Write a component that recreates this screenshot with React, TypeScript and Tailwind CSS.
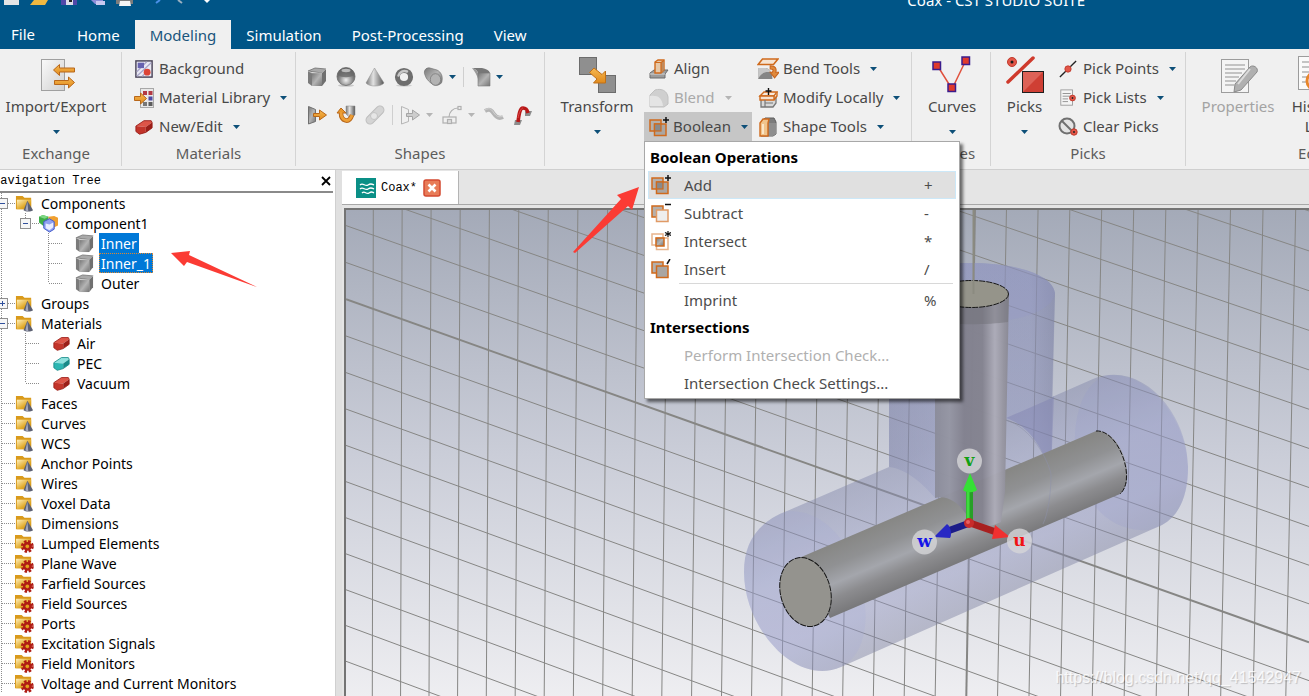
import React from 'react';

type IconProps = { size?: number };

function Svg({ size = 20, box = 20, children }: { size?: number; box?: number; children: React.ReactNode }) {
  return (
    <svg width={size} height={size} viewBox={`0 0 ${box} ${box}`} className="shrink-0" aria-hidden="true">
      {children}
    </svg>
  );
}

// Gradients shared by all the icons
function SharedDefs() {
  return (
    <svg width="0" height="0" className="absolute" aria-hidden="true">
      <defs>
        <linearGradient id="steel" x1="0" y1="0" x2="1" y2="1">
          <stop offset="0" stopColor="#777" />
          <stop offset="0.5" stopColor="#b4b4b4" />
          <stop offset="1" stopColor="#757575" />
        </linearGradient>
        <linearGradient id="steelH" x1="0" y1="0" x2="1" y2="0">
          <stop offset="0" stopColor="#777" />
          <stop offset="0.4" stopColor="#e2e2e2" />
          <stop offset="1" stopColor="#555" />
        </linearGradient>
        <radialGradient id="ball" cx="0.5" cy="0.7" r="0.6">
          <stop offset="0" stopColor="#f0f0f0" />
          <stop offset="0.6" stopColor="#8b8b8b" />
          <stop offset="1" stopColor="#555" />
        </radialGradient>
        <linearGradient id="paper" x1="0" y1="0" x2="1" y2="1">
          <stop offset="0" stopColor="#fafafa" />
          <stop offset="1" stopColor="#d0d0d0" />
        </linearGradient>
        <linearGradient id="amber" x1="0" y1="0" x2="0" y2="1">
          <stop offset="0" stopColor="#f6b850" />
          <stop offset="1" stopColor="#e08a1c" />
        </linearGradient>
        <linearGradient id="folder" x1="0" y1="0" x2="1" y2="1">
          <stop offset="0" stopColor="#fff0bb" />
          <stop offset="0.6" stopColor="#e0a826" />
          <stop offset="1" stopColor="#c88a10" />
        </linearGradient>
      </defs>
    </svg>
  );
}

function Caret({ muted = false }: { muted?: boolean }) {
  return (
    <svg width="7" height="4" viewBox="0 0 7 4" className="shrink-0" aria-hidden="true">
      <path d="M0 0h7L3.5 4z" fill={muted ? '#b5b5b5' : '#0d4f78'} />
    </svg>
  );
}

/* ---------- large ribbon icons ---------- */

const ImportExportIcon = () => (
  <Svg size={38} box={38}>
    <rect x="4.500" y="3.500" width="23" height="31" fill="url(#paper)" stroke="#a0a0a0" />
    <path d="M16.500 14l6-5.500v3.500h15v4h-15v3.500z" fill="url(#amber)" stroke="#b8671a" />
    <path d="M37.500 26.500l-6-5.500v3.500h-14v4h14V32z" fill="url(#amber)" stroke="#b8671a" />
  </Svg>
);

const TransformIcon = () => (
  <Svg size={38} box={38}>
    <rect x="1.500" y="1.500" width="17" height="17" fill="#8f8f8f" stroke="#6c6c6c" />
    <rect x="20.500" y="19.500" width="17" height="17" fill="#8f8f8f" stroke="#6c6c6c" />
    <path d="M11.500 16.500l4.500-4.500 8 6.500 3.500-3.500v12H15.500l3.500-4z" fill="url(#amber)" stroke="#c07018" />
  </Svg>
);

const CurvesIcon = () => (
  <Svg size={40} box={40}>
    <path d="M5 10l15 24L34 5" fill="none" stroke="#e0503c" strokeWidth="1.500" />
    <g fill="#e03a2c" stroke="#3b1c8c" strokeWidth="1.500">
      <rect x="1" y="7" width="7.500" height="7.500" />
      <rect x="30" y="2" width="7.500" height="7.500" />
      <rect x="16" y="29" width="7.500" height="7.500" />
    </g>
  </Svg>
);

const PicksIcon = () => (
  <Svg size={40} box={40}>
    <circle cx="7" cy="7" r="4.500" fill="#e25648" stroke="#c23a2c" />
    <circle cx="7" cy="7" r="1.500" fill="#1c1c1c" />
    <path d="M3 27L28 3" stroke="#cf3a2c" strokeWidth="3.500" strokeLinecap="round" />
    <rect x="17.500" y="16.500" width="21" height="21" fill="#cf3f34" stroke="#1f1f1f" />
    <path d="M18 37V17h20z" fill="#dd6257" />
  </Svg>
);

const PropertiesIcon = () => (
  <Svg size={40} box={40}>
    <rect x="3.500" y="4.500" width="27" height="33" fill="#f4f4f4" stroke="#9c9c9c" />
    <path d="M7 10h20M7 14h20M7 18h17M7 22h14M7 26h11M7 30h9" stroke="#b3b3b3" strokeWidth="1.500" />
    <path d="M32 12c3-3 9 1 7 5L23 35l-7 2 1-8z" fill="#b0b0b0" stroke="#8a8a8a" />
    <path d="M32 14L20 29" stroke="#dcdcdc" strokeWidth="2" />
  </Svg>
);

const HistoryIcon = () => (
  <Svg size={40} box={40}>
    <rect x="1.500" y="1.500" width="27" height="33" fill="#fafafa" stroke="#9c9c9c" />
    <path d="M5 7h20M5 12h20M5 17h20M5 22h8M5 27h8" stroke="#b3b3b3" strokeWidth="1.500" />
    <circle cx="19" cy="26" r="9" fill="#fff" stroke="#e8852a" strokeWidth="3" />
  </Svg>
);

/* ---------- small ribbon icons ---------- */

const BackgroundIcon = () => (
  <Svg size={18}>
    <rect x="1" y="1" width="18" height="18" fill="#e9e9f4" stroke="#4a4458" strokeWidth="1.600" />
    <path d="M2 13L13 2M2 18L18 3M8 18l5-5" stroke="#a8a4c8" strokeWidth="1.400" />
    <rect x="3" y="3" width="7" height="6" fill="#6762b0" />
    <circle cx="13.500" cy="13.500" r="3.800" fill="#dc4436" />
  </Svg>
);

const MaterialLibraryIcon = () => (
  <Svg size={20}>
    <rect x="6.500" y="0.500" width="13" height="19" fill="#e8e8e8" stroke="#a8a8a8" />
    <g fill="#b33a44">
      <rect x="9" y="3" width="4" height="4" />
      <rect x="14.500" y="3" width="4" height="4" />
    </g>
    <rect x="14.500" y="8.500" width="4" height="4" fill="#4d4aa4" />
    <rect x="9" y="14" width="4" height="4" fill="#777" />
    <rect x="14.500" y="14" width="4" height="4" fill="#5c5c5c" />
    <path d="M.5 8.500h6V5l6 5.500-6 5.500v-3.500h-6z" fill="url(#amber)" stroke="#b8671a" />
  </Svg>
);

function BrickIcon({ color = 'red', size = 18 }: IconProps & { color?: 'red' | 'teal' }) {
  const [top, front, side] = color === 'red' ? ['#dd5548', '#c2342a', '#9a1e18'] : ['#8fe2de', '#2cb6b2', '#188a88'];
  return (
    <Svg size={size}>
      <path d="M1 9l9-6h8l1 2-7 5z" fill={top} />
      <path d="M1 9l11 1v6l-7 2-4-3z" fill={front} />
      <path d="M12 10l7-5v6l-7 5z" fill={side} />
      <path d="M1 9l9-6h8l1 2v6l-7 5-7 2-4-3z" fill="none" stroke={side} strokeLinejoin="round" />
    </Svg>
  );
}

const CubeIcon = ({ size = 20 }: IconProps) => (
  <Svg size={size}>
    <path d="M1 4l7-3 11 1-4 4z" fill="#a9a9a9" stroke="#6e6e6e" strokeWidth="0.800" />
    <path d="M1 4l4 2v13l-4-3z" fill="#7b7b7b" />
    <path d="M5 6h10v13H5z" fill="url(#steel)" />
    <path d="M15 6l4-4v12l-4 5z" fill="#707070" />
    <path d="M1 4l4 2h10l4-4" stroke="#c4c4c4" strokeWidth="0.600" fill="none" />
  </Svg>
);

const SphereIcon = () => (
  <Svg>
    <ellipse cx="10" cy="18.500" rx="8" ry="1.300" fill="#c9c9c9" />
    <circle cx="10" cy="9.500" r="9" fill="url(#ball)" stroke="#6a6a6a" strokeWidth="0.800" />
    <path d="M1.500 8C2 3 6 1 10 1s8 2 8.500 7c-5 3-12 3-17 0z" fill="#6a6a6a" opacity="0.800" />
    <ellipse cx="10" cy="3.500" rx="4.500" ry="1.700" fill="#cfcfcf" opacity="0.800" />
  </Svg>
);

const ConeIcon = () => (
  <Svg>
    <path d="M9.500 1L19 16c-3 4-15 4-18 0z" fill="url(#steelH)" stroke="#8a8a8a" strokeWidth="0.500" />
  </Svg>
);

const TorusIcon = () => (
  <Svg>
    <ellipse cx="10" cy="18.500" rx="8" ry="1.200" fill="#cfcfcf" />
    <circle cx="10" cy="10" r="6.600" fill="none" stroke="#6e6e6e" strokeWidth="5" />
    <path d="M4.500 8.500a6.300 6.300 0 018.500-4" fill="none" stroke="#c8c8c8" strokeWidth="2.500" strokeLinecap="round" />
  </Svg>
);

const CylinderIcon = () => (
  <Svg>
    <path d="M2 8c-2-4 1-8 5-7l7 2c4 2 6 6 5 11 0 3-4 5-8 4C7 16 3 12 2 8z" fill="url(#steel)" stroke="#6a6a6a" strokeWidth="0.600" />
    <ellipse cx="12.500" cy="12.500" rx="5.200" ry="5.800" fill="#b3b3b3" stroke="#747474" strokeWidth="0.700" />
  </Svg>
);

const ExtrudeFaceIcon = () => (
  <Svg>
    <path d="M1 1h10c4 1 7 2 8 5H7C6 3 4 2 1 1z" fill="#777" />
    <path d="M1 1c3 1 5 2 6 5v6C6 8 4 5 1 1z" fill="#9a9a9a" />
    <path d="M7 6h12v13H7z" fill="url(#steel)" stroke="#7a7a7a" strokeWidth="0.600" />
  </Svg>
);

function ExtrudeIcon({ muted = false }: { muted?: boolean }) {
  return (
    <Svg>
      <path
        d="M1.500 1.500l7 3v12l-7 2.500z"
        fill={muted ? '#f0f0f0' : 'url(#steel)'}
        stroke={muted ? '#b5b5b5' : '#707070'}
      />
      <path
        d="M6.500 8.500h6V5l7 5-7 5v-3.500h-6z"
        fill={muted ? '#cdcdcd' : 'url(#amber)'}
        stroke={muted ? '#a5a5a5' : '#b8671a'}
      />
    </Svg>
  );
}

const RotateIcon = () => (
  <Svg>
    <path d="M10 1h9v9l-5 3-4-4z" fill="url(#steelH)" stroke="#8a8a8a" strokeWidth="0.500" />
    <path d="M5 8c0 8 8 11 11 2" fill="none" stroke="#b8671a" strokeWidth="4.600" />
    <path d="M1 8l4-5 5 5z" fill="#e8982c" stroke="#b8671a" />
    <path d="M5 7c0 9 8 12 11 3" fill="none" stroke="#ee9f35" strokeWidth="2.800" />
  </Svg>
);

const LoftIcon = () => (
  <Svg>
    <rect x="-1" y="6" width="22" height="8" rx="4" transform="rotate(-45 10 10)" fill="#d4d4d4" stroke="#bdbdbd" />
    <circle cx="9" cy="11" r="3.500" fill="#e6e6e6" stroke="#c4c4c4" />
  </Svg>
);

const WireIcon = () => (
  <Svg>
    <g fill="none" stroke="#b0b0b0" strokeWidth="1.200">
      <path d="M7 12c0-5 4-9 9-9" />
      <rect x="1" y="12" width="13" height="6" />
      <rect x="5.500" y="14.500" width="4" height="4" fill="#ddd" />
      <rect x="16" y="1.500" width="3" height="3" />
    </g>
  </Svg>
);

const WaveIcon = () => (
  <Svg>
    <path d="M1 6c5-3 7 0 9 3s5 5 9 3" fill="none" stroke="#b4b4b4" strokeWidth="4" />
    <path d="M1 5c5-3 7 0 9 3s5 5 9 3" fill="none" stroke="#d2d2d2" />
  </Svg>
);

const BondWireIcon = () => (
  <Svg>
    <path d="M2 15h7l-2 5H1zM12 6h7l-2 5h-5z" fill="#8c8c8c" />
    <path d="M5 17C6 9 7 3 10 3s4 1 5 5" fill="none" stroke="#b81818" strokeWidth="3.600" />
    <path d="M5 13C6 8 8 3 10 3" fill="none" stroke="#e04848" />
  </Svg>
);

const AlignIcon = () => (
  <Svg>
    <path d="M1 14l4-3h14l-3 4v4H1z" fill="#9c9c9c" stroke="#6c6c6c" />
    <path d="M1 15h15" stroke="#d4d4d4" />
    <path d="M6 3l3-2h6v10l-3 3H6z" fill="#e6c8a8" stroke="#cf6a1c" strokeWidth="1.400" />
    <path d="M12 3.500l3-2V11l-3 3z" fill="#c08a5c" />
    <path d="M6 3.500h6l3-2M12 3.500V14" fill="none" stroke="#cf6a1c" strokeWidth="1.200" />
  </Svg>
);

const BlendIcon = () => (
  <Svg>
    <path d="M1 7l5-5c7-2 12 1 13 7v7l-4 3H1z" fill="#cfcfcf" stroke="#c0c0c0" />
    <path d="M1 8c8-1 12 2 13 10H1z" fill="#e4e4e4" />
  </Svg>
);

const BendIcon = () => (
  <Svg size={22}>
    <path d="M1 6l4-5h14l-4 5z" fill="#f6e4d2" stroke="#cf6a1c" strokeWidth="1.400" />
    <path d="M1 9h7c4 1 6 4 6 10H1z" fill="#858585" />
    <path d="M1 9h7c3 1 4 2 5 4-5-1-9 0-12 6z" fill="#c6c6c6" />
    <path d="M12 7c5 0 6 3 5 6h3l-4 5-4-5h2c1-2 1-3-2-3z" fill="#e08a3c" stroke="#c8641c" />
  </Svg>
);

const ModifyIcon = () => (
  <Svg>
    <path d="M3 11v8h12l3-4V8" fill="#d8d8d8" stroke="#777" strokeWidth="1.300" />
    <path d="M2 8l4-4h13l-3 4z" fill="#f8eadc" stroke="#cf6a1c" strokeWidth="1.400" />
    <path d="M2 8h14v4H2zM16 12l3-4V4" fill="#f5e2d0" stroke="#cf6a1c" strokeWidth="1.400" />
    <path d="M7 12v7M7 15h8" fill="none" stroke="#777" strokeWidth="1.200" />
    <path d="M10.500 0v7M7.500 3h6" stroke="#111" strokeWidth="1.400" />
  </Svg>
);

const ShapeToolsIcon = () => (
  <Svg>
    <path d="M3 5l4-4h9l2 4v12l-3 2H3z" fill="#7c7c7c" stroke="#5e5e5e" />
    <path d="M11 6h7v11l-3 2h-4z" fill="#8e8e8e" />
    <path d="M2 6l3-4h6l-1 4v13H2z" fill="#f0c48c" stroke="#cf6a1c" strokeWidth="1.400" />
    <path d="M5 7v10" stroke="#fbe6c8" strokeWidth="2" />
  </Svg>
);

type BoolOp = 'add' | 'subtract' | 'intersect' | 'insert';

function BooleanIcon({ op }: { op: BoolOp }) {
  const back = op === 'intersect' ? 'none' : '#b4b0ac';
  const front = op === 'subtract' ? '#eeeeee' : op === 'intersect' ? 'none' : '#aaa6a2';
  const faint = op === 'intersect' ? '#e8b48c' : '#cf6a1c';
  return (
    <Svg>
      <rect x="1" y="3" width="11" height="11" fill={back} stroke={faint} strokeWidth="1.500" />
      <rect x="5.500" y="7" width="11.500" height="11.500" fill={front} stroke={op === 'subtract' ? '#e09a66' : faint} strokeWidth="1.500" />
      {op === 'add' && <rect x="5.500" y="7" width="6.500" height="7" fill="#8a8a8a" stroke="#cf6a1c" strokeWidth="1.200" />}
      {op === 'intersect' && <rect x="5" y="7" width="8" height="8" fill="url(#steel)" stroke="#cf6a1c" strokeWidth="1.500" />}
      <g stroke="#111" strokeWidth="1.500">
        {op === 'add' && <path d="M17 0v6M14 3h6" />}
        {op === 'subtract' && <path d="M14 1.500h6" />}
        {op === 'intersect' && <path d="M17 0v6M14 1.500l6 3M20 1.500l-6 3" strokeWidth="1.200" />}
        {op === 'insert' && <path d="M19 0l-3 5" />}
      </g>
    </Svg>
  );
}

const PickPointsIcon = () => (
  <Svg size={18}>
    <path d="M1 19L19 1" stroke="#222" strokeWidth="1.500" />
    <circle cx="10" cy="10" r="3.500" fill="#e25648" stroke="#c0392b" />
  </Svg>
);

const PickListsIcon = () => (
  <Svg size={18}>
    <rect x="2" y="1" width="13" height="17" fill="#f4f4f4" stroke="#9a9a9a" />
    <path d="M4 5h9M4 8h9M4 11h6M4 14h6" stroke="#8c8c8c" />
    <circle cx="15" cy="10" r="3.200" fill="#e25648" stroke="#c0392b" />
    <circle cx="15" cy="10" r="1" fill="#222" />
  </Svg>
);

const ClearPicksIcon = () => (
  <Svg size={20}>
    <circle cx="9" cy="9" r="7.500" fill="#e4e4e4" stroke="#707070" strokeWidth="2" />
    <path d="M4 4l10 10" stroke="#707070" strokeWidth="2" />
    <circle cx="16" cy="15" r="3.200" fill="#e25648" stroke="#c0392b" />
    <circle cx="16" cy="15" r="1" fill="#222" />
  </Svg>
);

/* ---------- title bar ---------- */

const TABS = ['Home', 'Modeling', 'Simulation', 'Post-Processing', 'View'];

function TitleBar() {
  return (
    <header className="shrink-0 bg-[#005587] text-white">
      <div className="flex h-5 items-start">
        <svg width="220" height="8" viewBox="0 0 220 8" aria-hidden="true">
          <path d="M4 0h15v5H4z" fill="#e4e4e4" />
          <path d="M30 5l4-5h14l-3 5z" fill="#f0b840" />
          <path d="M61 0h16v5H61z" fill="#5048a8" />
          <path d="M66 0h7v5h-7z" fill="#dcdce8" />
          <path d="M69 0h3v2h-3z" fill="#222" />
          <path d="M91 0h12v4h-8z" fill="#8c8cd8" />
          <path d="M96 1h9v4h-9z" fill="#c8c8f0" />
          <path d="M116 0h17v4h-17z" fill="#7c7c7c" />
          <path d="M120 1h10l1 5h-12z" fill="#f4f4f4" />
          <path d="M160 0l-4 3" stroke="#4a90e8" strokeWidth="2" />
          <path d="M178 0l4 3" stroke="#9ab0c0" strokeWidth="2" />
          <path d="M204 0h6l-3 3z" fill="#fff" />
        </svg>
        <h1 className="-mt-2 ml-auto pr-[224px] text-[15px] leading-4">Coax - CST STUDIO SUITE</h1>
      </div>
      <nav className="flex h-[29px] items-stretch text-[15px]">
        <button type="button" className="w-[62px] pl-[11px] text-left">File</button>
        {TABS.map((tab) => (
          <button
            key={tab}
            type="button"
            className={`px-[15px] pt-[2px] ${tab === 'Modeling' ? 'bg-[#f0f0f0] text-[#1a557c]' : ''}`}
          >
            {tab}
          </button>
        ))}
      </nav>
    </header>
  );
}

/* ---------- ribbon ---------- */

function Group({ label, className = '', children }: { label: string; className?: string; children: React.ReactNode }) {
  return (
    <section className={`flex shrink-0 flex-col border-r border-[#d4d4d4] pt-[2px] ${className}`}>
      <div className="flex h-[87px]">{children}</div>
      <div className="flex h-6 items-center justify-center text-[#5c5c5c]">{label}</div>
    </section>
  );
}

type BigButtonProps = {
  icon: React.ReactNode;
  label: React.ReactNode;
  caret?: boolean;
  disabled?: boolean;
  className?: string;
};

function BigButton({ icon, label, caret = true, disabled, className = '' }: BigButtonProps) {
  return (
    <button
      type="button"
      disabled={disabled}
      className={`flex flex-col items-center pt-[2px] text-center leading-5 ${disabled ? 'text-[#a3a3a3]' : ''} ${className}`}
    >
      <span className="mb-[2px] flex h-[38px] shrink-0 items-center">{icon}</span>
      <span>{label}</span>
      {caret && <span className="mt-[14px]"><Caret /></span>}
    </button>
  );
}

type ToolButtonProps = {
  icon: React.ReactNode;
  label: string;
  caret?: boolean;
  disabled?: boolean;
  active?: boolean;
};

function ToolButton({ icon, label, caret, disabled, active }: ToolButtonProps) {
  return (
    <button
      type="button"
      disabled={disabled}
      className={`flex h-[29px] items-center whitespace-nowrap px-1 ${disabled ? 'text-[#a9a9a9]' : ''} ${
        active ? 'w-full bg-[#c6c6c6]' : ''
      }`}
    >
      <span className="mr-1 flex w-[22px] justify-center">{icon}</span>
      {label}
      {caret && <span className="ml-[10px]"><Caret muted={disabled} /></span>}
    </button>
  );
}

const MENU_ITEMS: { op: BoolOp; label: string; key: string }[] = [
  { op: 'add', label: 'Add', key: '+' },
  { op: 'subtract', label: 'Subtract', key: '-' },
  { op: 'intersect', label: 'Intersect', key: '*' },
  { op: 'insert', label: 'Insert', key: '/' },
];

function MenuRow({ icon, label, shortcut, active, disabled }: {
  icon?: React.ReactNode;
  label: string;
  shortcut?: string;
  active?: boolean;
  disabled?: boolean;
}) {
  return (
    <button
      type="button"
      role="menuitem"
      disabled={disabled}
      className={`mx-[3px] flex h-7 items-center border ${
        active ? 'border-[#cce8f8] bg-[#e0e0e0]' : 'border-transparent'
      } ${disabled ? 'text-[#b0b0b0]' : 'text-[#4c4c4c]'}`}
    >
      <span className="w-[35px] pl-[2px]">{icon}</span>
      <span className="flex-1 text-left">{label}</span>
      {shortcut && <span className="w-[31px] text-left">{shortcut}</span>}
    </button>
  );
}

function BooleanMenu() {
  return (
    <div
      role="menu"
      className="absolute left-0 top-[29px] z-20 flex w-[316px] flex-col border border-[#a8a8a8] bg-white pb-px pt-[2px] text-[15px] shadow-[3px_3px_3px_rgba(0,0,0,0.55)]"
    >
      <div className="flex h-[27px] items-center pl-[5px] font-bold text-black">Boolean Operations</div>
      {MENU_ITEMS.map((item) => (
        <MenuRow
          key={item.op}
          icon={<BooleanIcon op={item.op} />}
          label={item.label}
          shortcut={item.key}
          active={item.op === 'add'}
        />
      ))}
      <div className="mb-[2px] ml-[34px] mr-[6px] h-px bg-[#d8d8d8]" />
      <MenuRow label="Imprint" shortcut="%" />
      <div className="flex h-[27px] items-center pl-[5px] font-bold text-black">Intersections</div>
      <MenuRow label="Perform Intersection Check..." disabled />
      <MenuRow label="Intersection Check Settings..." />
    </div>
  );
}

function IconButton({ label, disabled, children }: { label: string; disabled?: boolean; children: React.ReactNode }) {
  return (
    <button type="button" aria-label={label} disabled={disabled} className="flex items-center">
      {children}
    </button>
  );
}

function Ribbon() {
  return (
    <div className="relative z-10 flex h-[121px] shrink-0 border-b border-[#cfcfcf] bg-[#f0f0f0] py-[3px] text-[15px] text-[#484848]">
      <Group label="Exchange" className="w-[122px] pr-[9px]">
        <BigButton icon={<ImportExportIcon />} label="Import/Export" className="w-full" />
      </Group>

      <Group label="Materials" className="w-[174px]">
        <div className="flex flex-col items-start pl-[7px]">
          <ToolButton icon={<BackgroundIcon />} label="Background" />
          <ToolButton icon={<MaterialLibraryIcon />} label="Material Library" caret />
          <ToolButton icon={<BrickIcon />} label="New/Edit" caret />
        </div>
      </Group>

      <Group label="Shapes" className="w-[249px]">
        <div className="flex flex-col pl-[11px] pt-1">
          <div className="flex h-[38px] items-center gap-[9px]">
            <IconButton label="Brick"><CubeIcon /></IconButton>
            <IconButton label="Sphere"><SphereIcon /></IconButton>
            <IconButton label="Cone"><ConeIcon /></IconButton>
            <IconButton label="Torus"><TorusIcon /></IconButton>
            <IconButton label="Cylinder">
              <CylinderIcon />
              <span className="ml-[6px]"><Caret /></span>
            </IconButton>
            <span className="-mx-[2px] h-5 w-px bg-[#cfcfcf]" />
            <IconButton label="Extrude face">
              <ExtrudeFaceIcon />
              <span className="ml-[5px]"><Caret /></span>
            </IconButton>
          </div>
          <div className="flex h-[38px] items-center gap-[9px]">
            <IconButton label="Extrude"><ExtrudeIcon /></IconButton>
            <IconButton label="Rotate"><RotateIcon /></IconButton>
            <IconButton label="Loft" disabled><LoftIcon /></IconButton>
            <span className="-mx-[2px] h-5 w-px bg-[#cfcfcf]" />
            <IconButton label="Extrude curve" disabled>
              <ExtrudeIcon muted />
              <span className="ml-[6px]"><Caret muted /></span>
            </IconButton>
            <IconButton label="Trace" disabled>
              <WireIcon />
              <span className="ml-[6px]"><Caret muted /></span>
            </IconButton>
            <IconButton label="Wire" disabled><WaveIcon /></IconButton>
            <IconButton label="Bond wire"><BondWireIcon /></IconButton>
          </div>
        </div>
      </Group>

      <Group label="Tools" className="w-[367px]">
        <BigButton icon={<TransformIcon />} label="Transform" className="w-[99px] pl-[5px]" />
        <div className="flex w-[109px] flex-col items-start">
          <ToolButton icon={<AlignIcon />} label="Align" />
          <ToolButton icon={<BlendIcon />} label="Blend" caret disabled />
          <div className="relative w-[108px]">
            <ToolButton icon={<BooleanIcon op="add" />} label="Boolean" caret active />
            <BooleanMenu />
          </div>
        </div>
        <div className="flex flex-col items-start">
          <ToolButton icon={<BendIcon />} label="Bend Tools" caret />
          <ToolButton icon={<ModifyIcon />} label="Modify Locally" caret />
          <ToolButton icon={<ShapeToolsIcon />} label="Shape Tools" caret />
        </div>
      </Group>

      <Group label="Curves" className="w-[79px]">
        <BigButton icon={<CurvesIcon />} label="Curves" className="w-full pl-[2px]" />
      </Group>

      <Group label="Picks" className="w-[195px]">
        <BigButton icon={<PicksIcon />} label="Picks" className="w-[62px] pl-[5px]" />
        <div className="flex flex-col items-start">
          <ToolButton icon={<PickPointsIcon />} label="Pick Points" caret />
          <ToolButton icon={<PickListsIcon />} label="Pick Lists" caret />
          <ToolButton icon={<ClearPicksIcon />} label="Clear Picks" />
        </div>
      </Group>

      <Group label="Edit" className="w-[252px]">
        <BigButton icon={<PropertiesIcon />} label="Properties" caret={false} disabled className="w-[104px]" />
        <BigButton icon={<HistoryIcon />} label={<>History<br />List</>} caret={false} className="w-[54px]" />
      </Group>
    </div>
  );
}

/* ---------- navigation tree ---------- */

const ShapeFolderIcon = () => (
  <Svg size={19}>
    <path d="M1 2h7l2 2h7v12H1z" fill="#d99a1c" />
    <path d="M2 6h15v10H2z" fill="url(#folder)" />
    <path d="M13 7l6 10c-2 2-8 2-10 0z" fill="#5c6072" />
    <path d="M13 8l1 10c-2 0-3-1-3-1z" fill="#a4a8bc" />
  </Svg>
);

const GearFolderIcon = () => (
  <Svg size={19}>
    <path d="M0 1h7l2 2h8v12H0z" fill="#d99a1c" />
    <path d="M1 5h15v10H1z" fill="url(#folder)" />
    <circle cx="13" cy="13" r="5" fill="none" stroke="#b01c14" strokeWidth="3.600" strokeDasharray="2.400 1.550" />
    <circle cx="13" cy="13" r="3.300" fill="none" stroke="#b01c14" strokeWidth="2.600" />
    <circle cx="13" cy="13" r="1.500" fill="#e8a020" />
  </Svg>
);

const ComponentIcon = () => (
  <Svg size={19}>
    <path d="M0 3l4-2 6 2v7l-5 3-5-4z" fill="#3fae49" />
    <path d="M10 3l6-1 4 2v8l-6 3-4-4z" fill="#f0a030" />
    <path d="M0 3l4-2 6 2-4 2z" fill="#7ed884" />
    <path d="M5 8l6-3 5 3v8l-5 3-6-4z" fill="#8fa0f0" stroke="#4058c8" />
    <path d="M7 10l4 1 4-2v5l-4 3-4-2z" fill="#e8ecff" />
  </Svg>
);

type TreeRow = {
  label: string;
  icon: 'folder' | 'gear' | 'component' | 'solid' | 'red' | 'teal';
  level?: 'group' | 'solid' | 'material';
  box?: '+' | '-';
  last?: boolean;
  selected?: boolean;
  focused?: boolean;
};

const TREE: TreeRow[] = [
  { label: 'Components', icon: 'folder', box: '-' },
  { label: 'component1', icon: 'component', level: 'group', box: '-' },
  { label: 'Inner', icon: 'solid', level: 'solid', selected: true },
  { label: 'Inner_1', icon: 'solid', level: 'solid', selected: true, focused: true },
  { label: 'Outer', icon: 'solid', level: 'solid', last: true },
  { label: 'Groups', icon: 'folder', box: '+' },
  { label: 'Materials', icon: 'folder', box: '-' },
  { label: 'Air', icon: 'red', level: 'material' },
  { label: 'PEC', icon: 'teal', level: 'material' },
  { label: 'Vacuum', icon: 'red', level: 'material', last: true },
  { label: 'Faces', icon: 'folder' },
  { label: 'Curves', icon: 'folder' },
  { label: 'WCS', icon: 'folder' },
  { label: 'Anchor Points', icon: 'folder' },
  { label: 'Wires', icon: 'folder' },
  { label: 'Voxel Data', icon: 'folder' },
  { label: 'Dimensions', icon: 'folder' },
  { label: 'Lumped Elements', icon: 'gear' },
  { label: 'Plane Wave', icon: 'gear' },
  { label: 'Farfield Sources', icon: 'gear' },
  { label: 'Field Sources', icon: 'gear' },
  { label: 'Ports', icon: 'gear' },
  { label: 'Excitation Signals', icon: 'gear' },
  { label: 'Field Monitors', icon: 'gear' },
  { label: 'Voltage and Current Monitors', icon: 'gear' },
];

// gutter = space left of the icon, x = where the branch line hangs, to = where it ends
const LEVELS = {
  root: { gutter: 15, x: 2, to: 15 },
  group: { gutter: 39, x: 26, to: 39 },
  solid: { gutter: 75, x: 49, to: 63 },
  material: { gutter: 53, x: 26, to: 39 },
};

const TREE_ICONS: Record<TreeRow['icon'], React.ReactNode> = {
  folder: <ShapeFolderIcon />,
  gear: <GearFolderIcon />,
  component: <ComponentIcon />,
  solid: <CubeIcon size={19} />,
  red: <BrickIcon size={17} />,
  teal: <BrickIcon size={17} color="teal" />,
};

function Branch({ row }: { row: TreeRow }) {
  const { gutter, x, to } = LEVELS[row.level ?? 'root'];
  const boxX = row.level ? 20 : -3;
  const half = row.last || row.level === 'group';
  return (
    <svg width={gutter} height="20" className="shrink-0" aria-hidden="true">
      <g stroke="#8c8c8c" strokeDasharray="1 1">
        <path d="M1.500 0v20" />
        {row.level && <path d={`M${x - 0.5} 0v${half ? 10 : 20}`} />}
        <path d={`M${x} 10.500H${to}`} />
      </g>
      {row.box && (
        <g>
          <rect x={boxX + 0.5} y="5.500" width="10" height="10" fill="#f6f6f6" stroke="#8f8f8f" />
          <path d={`M${boxX + 3} 10.500h5${row.box === '+' ? 'm-2.500-2.500v5' : ''}`} stroke="#31509c" />
        </g>
      )}
    </svg>
  );
}

function NavigationTree() {
  return (
    <aside className="flex w-[335px] shrink-0 flex-col overflow-hidden bg-white">
      <div className="mr-[2px] flex h-[23px] shrink-0 items-center border-b-2 border-[#8a8a8a] font-['Liberation_Mono',monospace] text-[12px] text-black">
        <span className="-ml-[7px]">Navigation Tree</span>
        <button type="button" aria-label="Close navigation tree" className="ml-auto p-[2px]">
          <svg width="10" height="10" viewBox="0 0 10 10"><path d="M1 1l8 8M9 1L1 9" stroke="#000" strokeWidth="1.800" /></svg>
        </button>
      </div>
      <ul className="text-[14px] text-black">
        {TREE.map((row) => (
          <li key={row.label} className="flex h-5 items-center whitespace-nowrap">
            <Branch row={row} />
            {TREE_ICONS[row.icon]}
            <span
              className={`ml-[5px] flex h-5 items-center px-[2px] ${row.selected ? 'bg-[#0078d7] text-white' : ''} ${
                row.focused ? 'outline-1 -outline-offset-1 outline-dotted outline-[#e08830]' : ''
              }`}
            >
              {row.label}
            </span>
          </li>
        ))}
      </ul>
    </aside>
  );
}

/* ---------- 3D view ---------- */

// Perspective grid: both line families spread out slightly towards the far side
const UPRIGHTS = Array.from({ length: 32 }, (_, i) => ({
  x1: 373.3 + 28.76 * i + 0.0662 * i * i,
  x2: 372.3 + 28.2 * i + 0.075 * i * i,
  major: i === 20,
}));

const SLANTS = Array.from({ length: 28 }, (_, i) => {
  const k = i - 14;
  return {
    y1: 299.3 + 36.75 * k - 0.055 * k * k,
    y2: 642.3 + 38.4 * k - 0.074 * k * k,
    major: k === 0,
  };
});

function AxisLabel({ x, y, color, children }: { x: number; y: number; color: string; children: string }) {
  return (
    <g>
      <circle cx={x} cy={y} r="12.500" fill="#d6d6d8" opacity="0.800" />
      <text x={x} y={y + 5} textAnchor="middle" fontSize="17" fontWeight="bold" fill={color} fontFamily="'DejaVu Serif', serif">
        {children}
      </text>
    </g>
  );
}

function Viewport() {
  return (
    <svg
      viewBox="346 210 963 486"
      preserveAspectRatio="xMinYMin slice"
      className="block h-full w-full"
      role="img"
      aria-label="Coaxial tee model"
    >
      <defs>
        <linearGradient id="sky" x1="0" y1="0" x2="0" y2="1">
          <stop offset="0" stopColor="#a4aab8" />
          <stop offset="0.500" stopColor="#cacdd8" />
          <stop offset="1" stopColor="#eeeef1" />
        </linearGradient>
        <linearGradient id="rod" gradientUnits="userSpaceOnUse" x1="799" y1="558" x2="825" y2="620">
          <stop offset="0" stopColor="#878785" />
          <stop offset="0.300" stopColor="#909193" />
          <stop offset="0.550" stopColor="#a4a6ac" />
          <stop offset="0.750" stopColor="#8c8c8f" />
          <stop offset="1" stopColor="#78787a" />
        </linearGradient>
        <linearGradient id="post" gradientUnits="userSpaceOnUse" x1="935" y1="0" x2="1008" y2="0">
          <stop offset="0" stopColor="#8b8c9a" />
          <stop offset="0.200" stopColor="#9596a3" />
          <stop offset="0.400" stopColor="#82818e" />
          <stop offset="0.650" stopColor="#84838f" />
          <stop offset="0.820" stopColor="#adacb8" />
          <stop offset="1" stopColor="#8b8a95" />
        </linearGradient>
        <linearGradient id="shellV" gradientUnits="userSpaceOnUse" x1="889" y1="0" x2="1055" y2="0">
          <stop offset="0" stopColor="#7f84ad" />
          <stop offset="0.400" stopColor="#9ba1cc" />
          <stop offset="0.850" stopColor="#9ba1cc" />
          <stop offset="1" stopColor="#74799f" />
        </linearGradient>
        <linearGradient id="shellH" gradientUnits="userSpaceOnUse" x1="925" y1="450" x2="990" y2="604">
          <stop offset="0" stopColor="#7f84a8" />
          <stop offset="0.400" stopColor="#969bc4" />
          <stop offset="0.750" stopColor="#9195c0" />
          <stop offset="1" stopColor="#7b7f9e" />
        </linearGradient>
      </defs>

      <rect x="345" y="210" width="965" height="487" fill="url(#sky)" />
      <g stroke="#868684">
        {UPRIGHTS.map((l, i) => (
          <line key={i} x1={l.x1} y1="210" x2={l.x2} y2="696" strokeWidth={l.major ? 2 : 1} />
        ))}
        {SLANTS.map((l, i) => (
          <line key={i} x1="346" y1={l.y1} x2="1309" y2={l.y2} strokeWidth={l.major ? 2 : 1} />
        ))}
      </g>

      {/* outer shell */}
      <path
        d="M889 467V293c3-40 160-40 166 0l-3 104 41-18c48-20 95 34 95 88 0 28-8 48-26 58L841 667c-45 20-97-38-97-95 0-30 14-50 43-61z"
        fill="url(#shellH)"
        opacity="0.450"
      />
      <path d="M889 467V293c3-40 160-40 166 0l-4 180c-7-22-22-50-46-54v105c-20 12-50-12-70-26-12-14-28-29-46-31z" fill="url(#shellV)" opacity="0.300" />
      <path d="M889 293c3-40 160-40 166 0-5 40-160 40-166 0z" fill="#8f95cc" opacity="0.200" />
      <path d="M1110 375c-50 5-52 150 30 155 8 1 14-1 22-5 18-10 26-30 26-58-2-50-40-94-78-92z" fill="#9196cc" opacity="0.180" />
      <path d="M787 511c-30 12-43 31-43 61 0 57 52 115 97 95 50-22 20-160-54-156z" fill="#9fa5dc" opacity="0.140" />
      <path d="M1006 418l46-20 2-2-3 77c-8-24-22-48-45-55z" fill="#7a7eae" opacity="0.400" />

      {/* inner conductors */}
      <path d="M799 558L1096 431c24-2 42 48 24 63L830 618z" fill="url(#rod)" />
      <path d="M1096 431c22-2 41 48 24 63" fill="none" stroke="#151515" strokeDasharray="5 1.500" />
      <path d="M935 294v204c16-4 28 10 35 22 9 10 23 6 31 2l4-30 4-198z" fill="url(#post)" opacity="0.960" />
      <path d="M935 294v28c20 3 52 3 73 0l1-28z" fill="#6e6e76" opacity="0.450" />
      <ellipse cx="971.500" cy="294" rx="37" ry="13.500" fill="#95948a" stroke="#151515" strokeDasharray="6 1" />
      <path d="M973.500 210v84" stroke="#8b8b80" strokeWidth="2" />
      <ellipse cx="805.500" cy="592" rx="25" ry="35" transform="rotate(-15 805.500 592)" fill="#94938e" stroke="#151515" strokeDasharray="6 1" />
      <path d="M1006 420c26 8 42 40 45 54 0 20-3 40-8 50" fill="none" stroke="#8e92ac" opacity="0.500" />

      {/* local axes */}
      <path d="M969.500 522V490" stroke="#27a027" strokeWidth="7" />
      <path d="M968 522V490" stroke="#3fdc3f" strokeWidth="3" />
      <path d="M970 473l7 17c-3 3-11 3-14 0z" fill="#35e035" />
      <path d="M970 523l26 9" stroke="#a82020" strokeWidth="7" />
      <path d="M1010 537l-18 2 3-14z" fill="#f03030" />
      <path d="M967 524l-22 8" stroke="#1c1c88" strokeWidth="7" />
      <path d="M934 537l13-13c4 3 5 11 3 14z" fill="#2828c4" />
      <circle cx="969" cy="523" r="5" fill="#c82c2c" />
      <circle cx="968" cy="522" r="2" fill="#e86060" />
      <AxisLabel x={969.500} y={461} color="#12a012">v</AxisLabel>
      <AxisLabel x={1019.500} y={541} color="#f01414">u</AxisLabel>
      <AxisLabel x={924.500} y={542} color="#1414e8">w</AxisLabel>
    </svg>
  );
}

function Workspace() {
  return (
    <main className="flex min-w-0 flex-1 flex-col bg-[#e5e5e5]">
      <div className="flex h-[35px] shrink-0 items-end border-b border-[#a8a8a8]">
        <div className="flex h-[33px] w-[117px] items-center border-r border-[#b4b4b4] bg-white pl-[14px] font-['Liberation_Mono',monospace] text-[12px] text-black">
          <svg width="20" height="20" viewBox="0 0 20 20" aria-hidden="true">
            <path d="M0 0h20v20H0z" fill="#0a8f86" />
            <path d="M4 7c3-3 5 2 8 0s4-1 6 0M4 11c3-3 5 2 8 0s4-1 6 0M6 15c3-3 4 2 7 0s3-1 5 0" fill="none" stroke="#fff" strokeWidth="1.300" />
          </svg>
          <span className="ml-[5px]">Coax*</span>
          <button type="button" aria-label="Close Coax" className="ml-[6px]">
            <svg width="18" height="18" viewBox="0 0 18 18">
              <rect x="1" y="1" width="16" height="16" rx="2" fill="#e87c58" stroke="#d44a30" strokeWidth="1.500" />
              <path d="M5.500 5.500l7 7M12.500 5.500l-7 7" stroke="#fff" strokeWidth="2.600" />
            </svg>
          </button>
        </div>
      </div>
      <div className="relative ml-[2px] mt-[3px] min-h-0 flex-1 border-l-2 border-t-2 border-[#747474]">
        <Viewport />
        <span className="absolute bottom-[6px] right-[8px] font-['Liberation_Sans',sans-serif] text-[16px] text-white/80 [text-shadow:1px_1px_1px_rgba(0,0,0,0.2)]">
          https://blog.csdn.net/qq_41542947
        </span>
      </div>
    </main>
  );
}

function Arrows() {
  return (
    <svg width="700" height="320" className="pointer-events-none absolute left-0 top-0 z-30" aria-hidden="true">
      <path d="M171 253l19-2-1 4 68 32-70-25-3 4z" fill="#fb3b34" />
      <path d="M573 252l48-53-4-4 22-8-7 23-4-4-53 47z" fill="#fb3b34" />
    </svg>
  );
}

export default function App() {
  return (
    <div className="relative flex h-screen flex-col overflow-hidden bg-[#e5e5e5] font-['Noto_Sans',sans-serif]">
      <SharedDefs />
      <TitleBar />
      <Ribbon />
      <div className="flex min-h-0 flex-1">
        <NavigationTree />
        <div className="w-[7px] shrink-0 border-l border-[#d0d0d0] bg-[#e0e0e0]" />
        <Workspace />
      </div>
      <Arrows />
    </div>
  );
}
